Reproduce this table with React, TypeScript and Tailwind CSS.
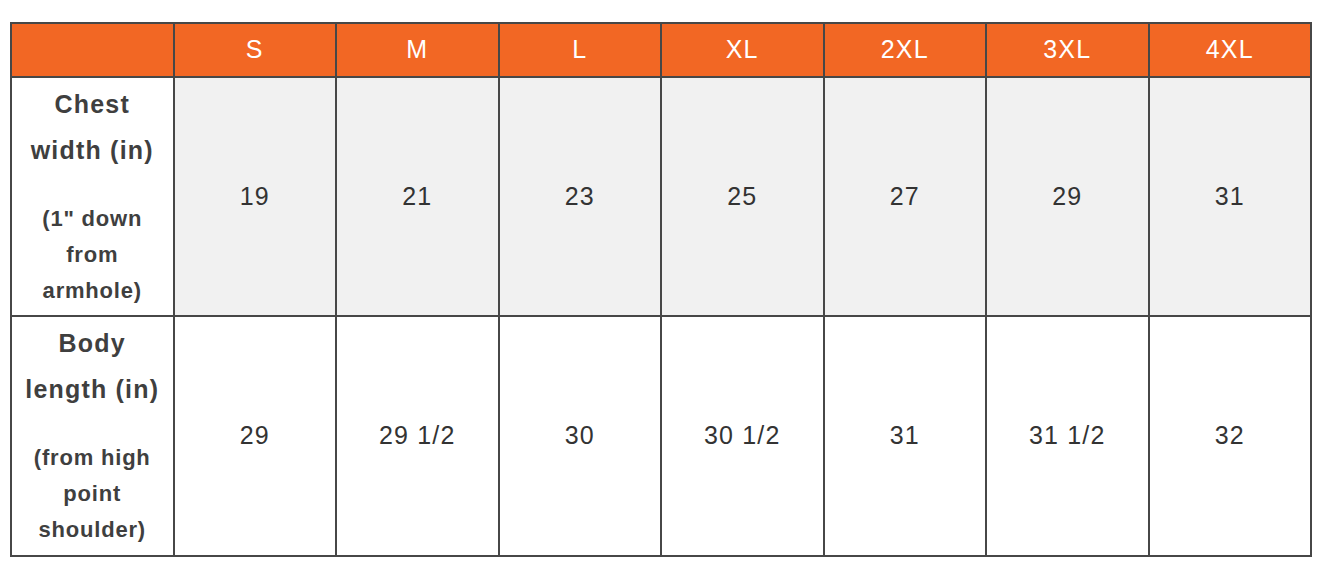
const sizes = ['S', 'M', 'L', 'XL', '2XL', '3XL', '4XL'];

const rows = [
  {
    title: ['Chest', 'width (in)'],
    note: ['(1" down', 'from', 'armhole)'],
    values: ['19', '21', '23', '25', '27', '29', '31'],
    bg: 'bg-[#f1f1f1]',
  },
  {
    title: ['Body', 'length (in)'],
    note: ['(from high', 'point', 'shoulder)'],
    values: ['29', '29 1/2', '30', '30 1/2', '31', '31 1/2', '32'],
    bg: 'bg-white',
  },
];

export default function App() {
  return (
    <div className="min-h-[564px] w-[1318px] bg-white pt-[22px] pl-[10px] font-['Liberation_Sans',Arial,sans-serif]">
      <div className="grid w-[1302px] grid-cols-8 grid-rows-[52px_237px_238px] gap-[2px] bg-[#474747] p-[2px]">
        <div className="bg-[#f26724]" />
        {sizes.map((s) => (
          <div
            key={s}
            className="flex items-center justify-center bg-[#f26724] text-[25px] tracking-[1.2px] text-white"
          >
            {s}
          </div>
        ))}

        {rows.map((row) => (
          <div key={row.title[0]} className="contents">
            <div className="flex flex-col items-center justify-center bg-white pb-[4px] text-center font-bold text-[#3f3f3f]">
              <p className="text-[25px] leading-[46px] tracking-[1.2px]">
                {row.title.map((line) => (
                  <span key={line} className="block">
                    {line}
                  </span>
                ))}
              </p>
              <p className="mt-[28px] text-[22px] leading-[36px] tracking-[0.8px]">
                {row.note.map((line) => (
                  <span key={line} className="block">
                    {line}
                  </span>
                ))}
              </p>
            </div>
            {row.values.map((v, i) => (
              <div
                key={i}
                className={`flex items-center justify-center ${row.bg} text-[25px] tracking-[1.2px] text-[#333333]`}
              >
                {v}
              </div>
            ))}
          </div>
        ))}
      </div>
    </div>
  );
}
